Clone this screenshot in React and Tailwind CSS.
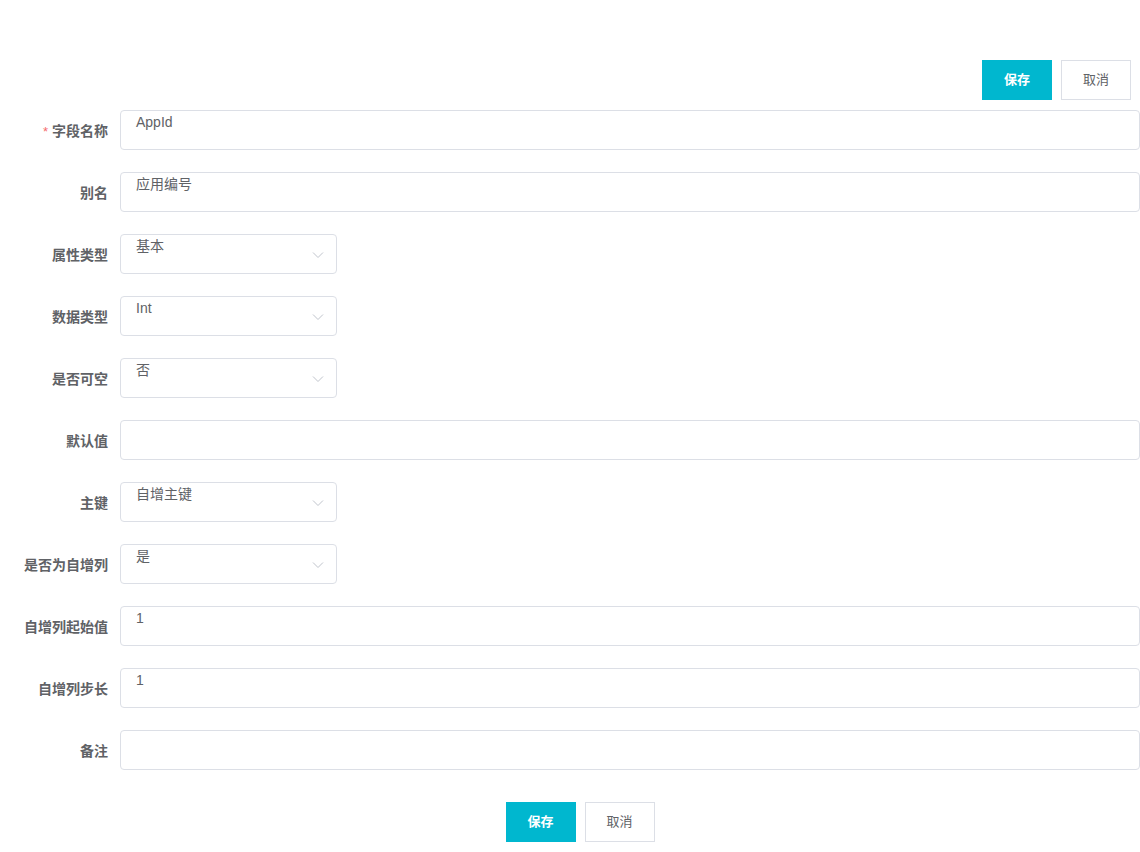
import React from "react";

const font = { fontFamily: '"Liberation Sans", Arial, "Noto Sans CJK SC", sans-serif' };

function Chevron() {
  return (
    <svg width="12" height="8" viewBox="0 0 12 8" className="absolute right-[12px] top-[16px]">
      <path d="M1 1.5 L6 6.5 L11 1.5" fill="none" stroke="#c0c4cc" strokeWidth="1" />
    </svg>
  );
}

function Row({ label, required, value, select }) {
  return (
    <div className="flex items-center mb-[22px]">
      <div className="w-[120px] pr-[12px] pt-[2px] text-right text-[14px] font-bold text-[#606266] shrink-0">
        {required && <span className="text-[#f56c6c] mr-[4px] font-normal text-[13px]">*</span>}
        {label}
      </div>
      <div
        className={
          "relative h-10 border border-[#dcdfe6] rounded-[4px] bg-white " +
          (select ? "w-[217px]" : "flex-1")
        }
      >
        <div className="pl-[15px] pt-[1px] leading-5 text-[14px] text-[#606266]">{value}</div>
        {select && <Chevron />}
      </div>
    </div>
  );
}

function Buttons() {
  return (
    <div className="flex gap-[9px]">
      <button className="w-[70px] h-10 bg-[#00b7cf] text-white text-[13px] font-bold">保存</button>
      <button className="w-[70px] h-10 bg-white border border-[#dcdfe6] text-[#606266] text-[13px]">取消</button>
    </div>
  );
}

export default function App() {
  const rows = [
    { label: "字段名称", required: true, value: "AppId" },
    { label: "别名", value: "应用编号" },
    { label: "属性类型", value: "基本", select: true },
    { label: "数据类型", value: "Int", select: true },
    { label: "是否可空", value: "否", select: true },
    { label: "默认值", value: "" },
    { label: "主键", value: "自增主键", select: true },
    { label: "是否为自增列", value: "是", select: true },
    { label: "自增列起始值", value: "1" },
    { label: "自增列步长", value: "1" },
    { label: "备注", value: "" },
  ];
  return (
    <div className="w-[1140px] h-[852px] bg-white overflow-hidden" style={font}>
      <div className="flex justify-end pt-[60px] pr-[9px] mb-[10px]">
        <Buttons />
      </div>
      <div>
        {rows.map((r) => (
          <Row key={r.label} {...r} />
        ))}
      </div>
      <div className="flex justify-center mt-[32px] pl-[20px]">
        <Buttons />
      </div>
    </div>
  );
}
